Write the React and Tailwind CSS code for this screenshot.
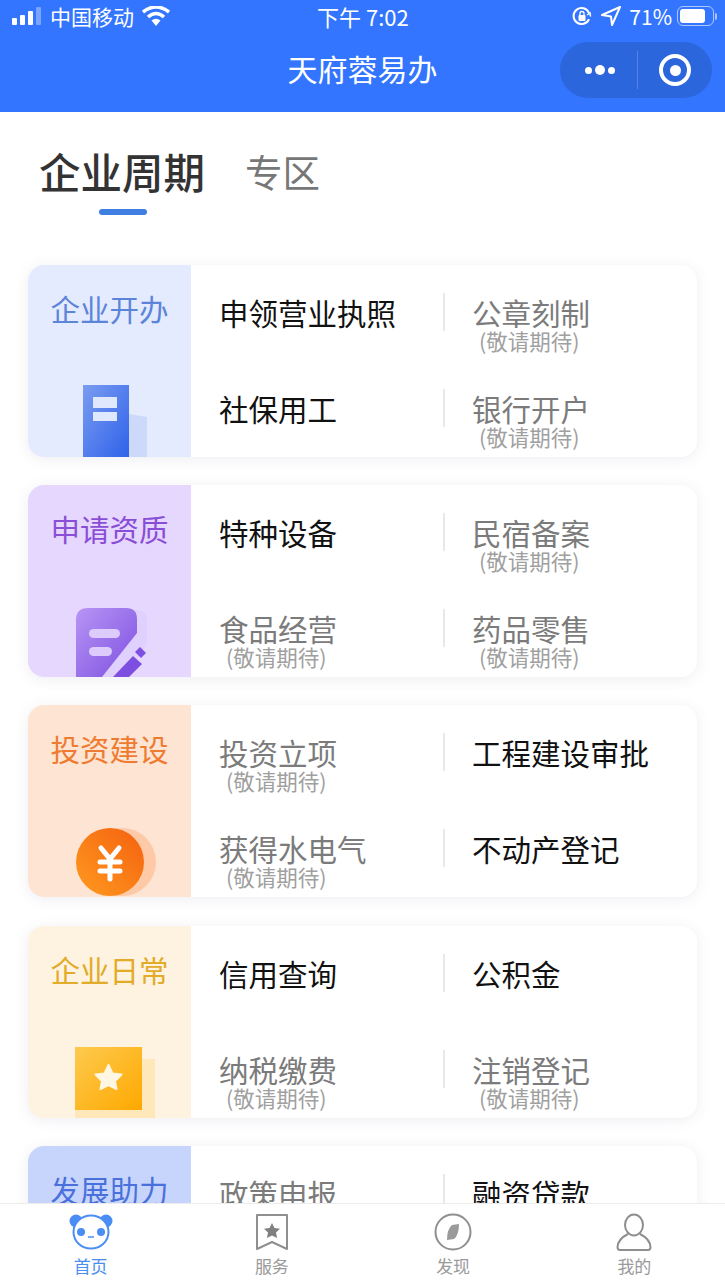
import React from "react";

const cards = [
  {
    title: "企业开办",
    panel: "bg-[#e4ebfe]",
    color: "text-[#5c84d9]",
    icon: "building",
    items: [
      { name: "申领营业执照" },
      { name: "公章刻制", soon: true },
      { name: "社保用工" },
      { name: "银行开户", soon: true },
    ],
  },
  {
    title: "申请资质",
    panel: "bg-[#e5d7fe]",
    color: "text-[#8a4ed6]",
    icon: "doc",
    items: [
      { name: "特种设备" },
      { name: "民宿备案", soon: true },
      { name: "食品经营", soon: true },
      { name: "药品零售", soon: true },
    ],
  },
  {
    title: "投资建设",
    panel: "bg-[#fde4d3]",
    color: "text-[#ee7b30]",
    icon: "coin",
    items: [
      { name: "投资立项", soon: true },
      { name: "工程建设审批" },
      { name: "获得水电气", soon: true },
      { name: "不动产登记" },
    ],
  },
  {
    title: "企业日常",
    panel: "bg-[#fef3e0]",
    color: "text-[#e2ab2a]",
    icon: "star",
    items: [
      { name: "信用查询" },
      { name: "公积金" },
      { name: "纳税缴费", soon: true },
      { name: "注销登记", soon: true },
    ],
  },
  {
    title: "发展助力",
    panel: "bg-[#c7d5fd]",
    color: "text-[#4a70dc]",
    icon: null,
    items: [{ name: "政策申报", soon: true }, { name: "融资贷款" }],
  },
];

function BuildingIcon() {
  return (
    <svg width="65" height="72" viewBox="0 0 65 72" className="mt-auto ml-[55px] block">
      <defs>
        <linearGradient id="bld" x1="0" y1="0" x2="1" y2="1">
          <stop offset="0" stopColor="#7a9cf0" />
          <stop offset="1" stopColor="#2f62ea" />
        </linearGradient>
      </defs>
      <path d="M46 29 L64 32 V72 H46 Z" fill="#ccd9fb" />
      <rect x="0" y="0" width="46" height="72" fill="url(#bld)" />
      <rect x="10" y="12" width="24" height="11" fill="#dfe8fd" />
      <rect x="10" y="27" width="24" height="9" fill="#dfe8fd" />
    </svg>
  );
}

function DocIcon() {
  return (
    <svg width="76" height="69" viewBox="0 0 76 69" className="mt-auto ml-[48px] block">
      <defs>
        <linearGradient id="doc" x1="0" y1="0" x2="1" y2="1">
          <stop offset="0" stopColor="#b795f5" />
          <stop offset="1" stopColor="#7d4fe0" />
        </linearGradient>
      </defs>
      <path d="M20 2 H60 Q71 2 71 13 V36 L50 69 H20 Z" fill="#e0d0fd" />
      <path d="M12 0 H50 Q61 0 61 11 V25 L26 69 H0 V12 Q0 0 12 0 Z" fill="url(#doc)" />
      <rect x="13" y="21" width="31" height="9" rx="4.5" fill="#dccbfb" />
      <rect x="13" y="39" width="23" height="9" rx="4.5" fill="#dccbfb" />
      <path d="M37 69 L57 48 L66 56 L53 69 Z" fill="#7d4fe0" />
      <path d="M59 44 L64 39 L70 45 L65 50 Z" fill="#7d4fe0" />
    </svg>
  );
}

function CoinIcon() {
  return (
    <svg width="80" height="68" viewBox="0 0 80 68" className="mt-auto mb-[1px] ml-[48px] block">
      <defs>
        <linearGradient id="coin" x1="0" y1="1" x2="1" y2="0">
          <stop offset="0" stopColor="#ff9a1f" />
          <stop offset="1" stopColor="#f4610f" />
        </linearGradient>
      </defs>
      <circle cx="46" cy="34" r="34" fill="#fdc9a6" />
      <circle cx="34" cy="34" r="34" fill="url(#coin)" />
      <path
        d="M25 20 L34 31 L43 20 M24 34 H44 M24 43 H44 M34 31 V51"
        fill="none"
        stroke="#fff"
        strokeWidth="5"
        strokeLinecap="round"
      />
    </svg>
  );
}

function StarIcon() {
  return (
    <svg width="80" height="71" viewBox="0 0 80 71" className="mt-auto ml-[47px] block">
      <defs>
        <linearGradient id="sq" x1="0" y1="0" x2="1" y2="1">
          <stop offset="0" stopColor="#fdca4f" />
          <stop offset="1" stopColor="#ffa800" />
        </linearGradient>
      </defs>
      <rect x="0" y="12" width="80" height="59" fill="#fee7b8" />
      <rect x="0" y="0" width="67" height="63" fill="url(#sq)" />
      <path
        d="M33.5 18 L37.5 26.5 L46.5 27.5 L40 34 L41.5 42 L33.5 38 L25.5 42 L27 34 L20.5 27.5 L29.5 26.5 Z"
        fill="#fff7e3"
        stroke="#fff7e3"
        strokeWidth="2"
        strokeLinejoin="round"
      />
    </svg>
  );
}

const icons = { building: BuildingIcon, doc: DocIcon, coin: CoinIcon, star: StarIcon };

function Card({ card }) {
  const Icon = card.icon ? icons[card.icon] : null;
  return (
    <div className="flex h-[192px] shrink-0 overflow-hidden rounded-2xl bg-white shadow-[0_2px_14px_rgba(90,90,140,0.10)]">
      <div className={`flex w-[163px] shrink-0 flex-col pt-[24px] ${card.panel}`}>
        <div className={`whitespace-nowrap text-center text-[29.5px] leading-[38px] ${card.color}`}>{card.title}</div>
        {Icon && <Icon />}
      </div>
      <div className="grid flex-1 grid-cols-[252px_1fr] auto-rows-[96px] pt-[28px]">
        {card.items.map((item, i) => (
          <div key={item.name}>
            <div
              className={`h-[38px] whitespace-nowrap text-[29.5px] leading-[38px] ${
                i % 2 === 1 ? "border-l-2 border-[#e8e8e8] pl-[27px]" : "pl-[28px]"
              } ${item.soon ? "text-[#7b7b7b]" : "text-[#111111]"}`}
            >
              {item.name}
            </div>
            {item.soon && (
              <div
                className={`-mt-[1px] whitespace-nowrap text-[21.5px] leading-[22px] text-[#a0a0a0] ${
                  i % 2 === 1 ? "pl-[36px]" : "pl-[35px]"
                }`}
              >
                (敬请期待)
              </div>
            )}
          </div>
        ))}
      </div>
    </div>
  );
}

function StatusBar() {
  return (
    <div className="flex h-[36px] items-center pb-[4px] text-white">
      <div className="flex w-[260px] items-center pl-[12px]">
        <svg width="30" height="18" viewBox="0 0 30 18">
          <rect x="0" y="11" width="5" height="7" rx="1" fill="#fff" />
          <rect x="8" y="8" width="5" height="10" rx="1" fill="#fff" />
          <rect x="16" y="4" width="5" height="14" rx="1" fill="#fff" />
          <rect x="24" y="0" width="5" height="18" rx="1" fill="#fff" opacity="0.35" />
        </svg>
        <span className="ml-[8px] text-[21px] leading-none">中国移动</span>
        <svg width="28" height="20" viewBox="0 0 28 20" className="ml-[8px]">
          <path d="M1 6 Q14 -4 27 6" fill="none" stroke="#fff" strokeWidth="3.5" />
          <path d="M6 11 Q14 4 22 11" fill="none" stroke="#fff" strokeWidth="3.5" />
          <path d="M9.5 14.5 Q14 11 18.5 14.5 L14 20 Z" fill="#fff" />
        </svg>
      </div>
      <div className="flex-1 pl-[57px] text-[22px] leading-none">下午 7:02</div>
      <div className="flex items-center pr-[8px]">
        <svg width="20" height="20" viewBox="0 0 20 20">
          <path d="M17 13 A8 8 0 1 1 17 7" fill="none" stroke="#fff" strokeWidth="2" />
          <path d="M15 9 L18 7 L18.5 10.5" fill="none" stroke="#fff" strokeWidth="1.5" />
          <rect x="6.5" y="9" width="7" height="6" rx="1" fill="#fff" />
          <path d="M8 9 V7.5 A2 2 0 0 1 12 7.5 V9" fill="none" stroke="#fff" strokeWidth="1.3" />
        </svg>
        <svg width="20" height="20" viewBox="0 0 20 20" className="ml-[9px]">
          <path d="M19 1 L1 9 L10 10.5 L11 19 Z" fill="none" stroke="#fff" strokeWidth="2" strokeLinejoin="round" />
        </svg>
        <span className="ml-[8px] text-[21px] leading-none">71%</span>
        <div className="ml-[5px] flex h-[20px] w-[37px] items-center rounded-[6px] border border-white/60 p-[2px]">
          <div className="h-full w-[25px] rounded-[3px] bg-white" />
        </div>
        <div className="ml-[1px] h-[7px] w-[2px] rounded-r bg-white/60" />
      </div>
    </div>
  );
}

function NavBar() {
  return (
    <div className="relative flex h-[76px] items-center justify-center">
      <div className="pb-[12px] text-[30px] leading-none text-white">天府蓉易办</div>
      <div className="absolute right-[13px] top-[6px] flex h-[56px] w-[152px] items-center rounded-full bg-[#2c66dc]">
        <div className="flex w-[77px] items-center justify-center gap-[3px] pl-[2px]">
          <span className="h-[7px] w-[7px] rounded-full bg-white" />
          <span className="h-[10px] w-[10px] rounded-full bg-white" />
          <span className="h-[7px] w-[7px] rounded-full bg-white" />
        </div>
        <div className="h-[38px] w-px bg-white/20" />
        <div className="flex flex-1 items-center justify-center">
          <div className="flex h-[32px] w-[32px] items-center justify-center rounded-full border-[4px] border-white">
            <span className="h-[11px] w-[11px] rounded-full bg-white" />
          </div>
        </div>
      </div>
    </div>
  );
}

function PandaIcon() {
  return (
    <svg width="44" height="38" viewBox="0 0 44 38">
      <circle cx="7" cy="8" r="6.5" fill="#4a8ef5" />
      <circle cx="37" cy="8" r="6.5" fill="#4a8ef5" />
      <ellipse cx="22" cy="19" rx="17.5" ry="16.5" fill="#fff" stroke="#4a8ef5" strokeWidth="2" />
      <circle cx="12" cy="19" r="4" fill="#4a8ef5" />
      <circle cx="32" cy="19" r="4" fill="#4a8ef5" />
      <path d="M19 24 H25" stroke="#4a8ef5" strokeWidth="1.5" />
    </svg>
  );
}

function ServiceIcon() {
  return (
    <svg width="34" height="38" viewBox="0 0 34 38">
      <path
        d="M2 2 H32 V36 L17 29 L2 36 Z"
        fill="#fff"
        stroke="#8f8f8f"
        strokeWidth="2"
        strokeLinejoin="round"
      />
      <path
        d="M17 10 L19.5 15 L25 15.7 L21 19.5 L22 25 L17 22.4 L12 25 L13 19.5 L9 15.7 L14.5 15 Z"
        fill="#808080"
      />
    </svg>
  );
}

function CompassIcon() {
  return (
    <svg width="38" height="38" viewBox="0 0 38 38">
      <circle cx="19" cy="19" r="17.5" fill="#fff" stroke="#8f8f8f" strokeWidth="2" />
      <path d="M25 11 Q25 22 20 26 L13 27 Q13 16 18 12 Z" fill="#9a9a9a" />
    </svg>
  );
}

function UserIcon() {
  return (
    <svg width="36" height="38" viewBox="0 0 36 38">
      <ellipse cx="18" cy="12" rx="9" ry="10.5" fill="none" stroke="#8f8f8f" strokeWidth="2" />
      <path
        d="M12 21 Q2 26 1.5 34 Q1.5 37 4 37 H32 Q34.5 37 34.5 34 Q34 26 24 21"
        fill="none"
        stroke="#8f8f8f"
        strokeWidth="2"
      />
    </svg>
  );
}

const tabs = [
  { label: "首页", icon: PandaIcon, active: true },
  { label: "服务", icon: ServiceIcon },
  { label: "发现", icon: CompassIcon },
  { label: "我的", icon: UserIcon },
];

function TabBar() {
  return (
    <div className="z-10 grid h-[85px] shrink-0 grid-cols-4 border-t border-[#ececec] bg-white">
      {tabs.map((tab) => (
        <div key={tab.label} className="flex flex-col items-center pt-[9px]">
          <div className="flex h-[38px] items-center">
            <tab.icon />
          </div>
          <div
            className={`mt-[3px] text-[17px] leading-[24px] ${
              tab.active ? "text-[#4a8ef0]" : "text-[#9a9a9a]"
            }`}
          >
            {tab.label}
          </div>
        </div>
      ))}
    </div>
  );
}

export default function App() {
  return (
    <div className="flex h-[1288px] w-[725px] flex-col overflow-hidden bg-white font-['Noto_Sans_CJK_SC','Liberation_Sans',sans-serif]">
      <div className="h-[112px] shrink-0 bg-[#3375fe]">
        <StatusBar />
        <NavBar />
      </div>
      <div className="flex-1 overflow-hidden px-[28px]">
        <div className="flex h-[153px] flex-col pl-[11px] pt-[33px]">
          <div className="flex items-center">
            <span className="text-[41.5px] font-medium leading-[52px] text-[#333333]">企业周期</span>
            <span className="ml-[40px] text-[37.5px] leading-[52px] text-[#777777]">专区</span>
          </div>
          <div className="ml-[60px] mt-[12px] h-[6px] w-[48px] rounded-sm bg-[#3f7fe2]" />
        </div>
        <div className="flex flex-col gap-[28.2px]">
          {cards.map((card) => (
            <Card key={card.title} card={card} />
          ))}
        </div>
      </div>
      <TabBar />
    </div>
  );
}
